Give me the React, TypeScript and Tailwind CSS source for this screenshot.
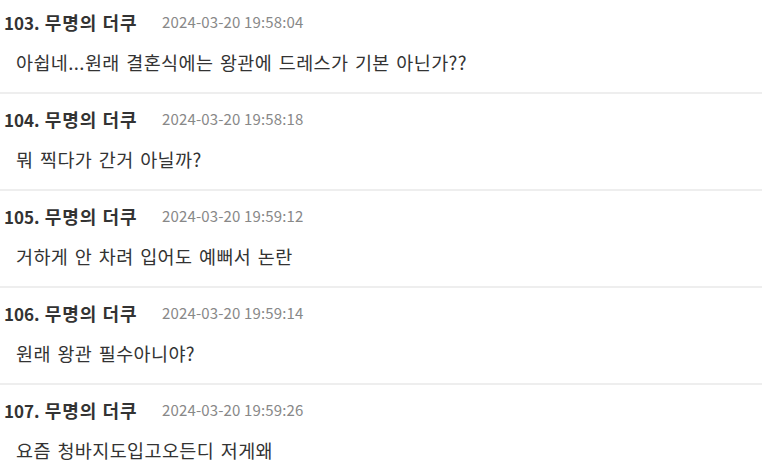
import React from "react";

const items = [
  { n: 103, t: "2024-03-20 19:58:04", body: "아쉽네...원래 결혼식에는 왕관에 드레스가 기본 아닌가??" },
  { n: 104, t: "2024-03-20 19:58:18", body: "뭐 찍다가 간거 아닐까?" },
  { n: 105, t: "2024-03-20 19:59:12", body: "거하게 안 차려 입어도 예뻐서 논란" },
  { n: 106, t: "2024-03-20 19:59:14", body: "원래 왕관 필수아니야?" },
  { n: 107, t: "2024-03-20 19:59:26", body: "요즘 청바지도입고오든디 저게왜" },
];

export default function App() {
  return (
    <div
      className="w-[762px] h-[473px] overflow-hidden bg-white"
      style={{ fontFamily: '"Noto Sans CJK KR", "Noto Sans", sans-serif' }}
    >
      <div className="-mt-[3px]">
        {items.map((it) => (
          <div key={it.n} className="h-[97px] border-b-2 border-[#eeeeee] pl-[4px] pt-[12px]">
            <div className="flex items-center h-[26px]">
              <span className="w-[158px] font-bold text-[#333333] whitespace-nowrap">
                <span className="text-[17px]">{it.n}.</span>
                <span className="text-[18px] tracking-[1px]"> 무명의 더쿠</span>
              </span>
              <span className="text-[15px] tracking-[0.15px] text-[#888888]">{it.t}</span>
            </div>
            <div className="pl-[12px] mt-[15px] h-[26px] flex items-center text-[18.5px] tracking-[0.4px] text-[#333333] [word-spacing:2px]">
              {it.body}
            </div>
          </div>
        ))}
      </div>
    </div>
  );
}
